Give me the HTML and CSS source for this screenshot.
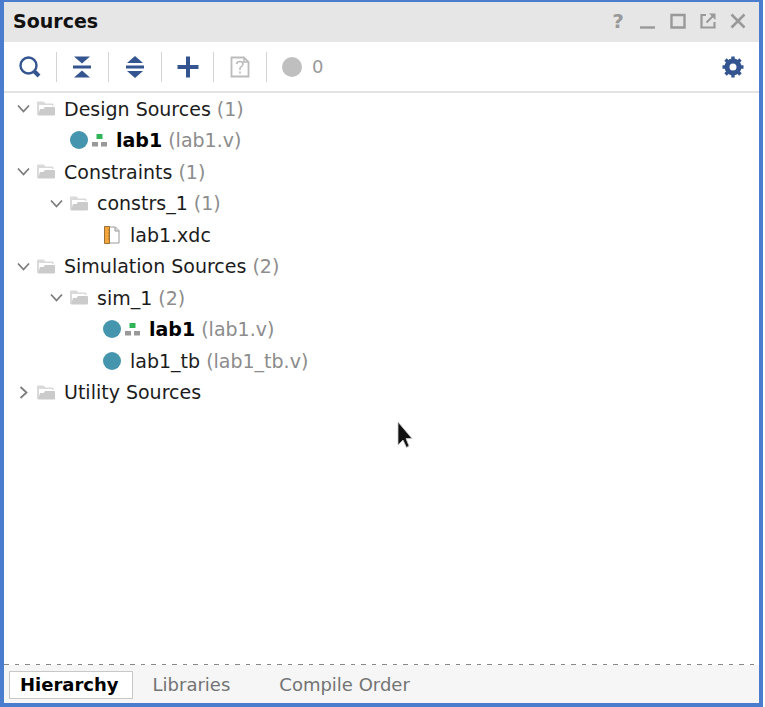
FILE: index.html
```html
<!DOCTYPE html>
<html lang="en">
<head>
<meta charset="utf-8">
<title>Sources</title>
<link rel="stylesheet" href="styles.css">
</head>
<body>
<svg class="defs" aria-hidden="true">
  <symbol id="folder" viewBox="0 0 18 15">
    <path d="M0 14V1.500Q0 0.500 1 0.500H6.500L8.500 2.500H15.500Q16.500 2.500 16.500 3.500V5H15V4H2V14Z" fill="#dadada"/>
    <path d="M3 8H6.500L8 6H17Q18 6 18 7V13.500Q18 14.500 17 14.500H1Z" fill="#cbcbcb"/>
  </symbol>
  <symbol id="down" viewBox="0 0 13 13"><path d="M1 3.500L6.500 9.500L12 3.500" fill="none" stroke="#7c7c7c" stroke-width="1.800"/></symbol>
  <symbol id="right" viewBox="0 0 13 13"><path d="M3.500 1L9.500 6.500L3.500 12" fill="none" stroke="#7c7c7c" stroke-width="1.800"/></symbol>
  <symbol id="module" viewBox="0 0 18 18"><circle cx="9" cy="9" r="9" fill="#4595ae"/></symbol>
  <symbol id="top" viewBox="0 0 15 13"><path d="M4.500 0H10.500V5H4.500Z" fill="#2fb457"/><path d="M0 8H6V12.500H0ZM9 8H15V12.500H9Z" fill="#999"/></symbol>
  <symbol id="xdc" viewBox="0 0 18 18">
    <path d="M6 1H12.500L16 4.500V17H6Z" fill="#fff" stroke="#9a9a9a"/><path d="M12 1V5H16" fill="#ddd" stroke="#9a9a9a"/>
    <path d="M1.500 0.500H6.500V17.500H1.500Z" fill="#f4a63a" stroke="#98703a"/><path d="M5 4H6M5 7H6M5 10H6M5 13H6" stroke="#98703a"/>
  </symbol>
</svg>
<main class="panel">
  <header class="titlebar">
    <h1>Sources</h1>
    <div class="window-actions">
      <button aria-label="Help" class="help">?</button>
      <button aria-label="Minimize"><svg width="16" height="16"><path d="M0 14.500H15" stroke="#999" stroke-width="2.400"/></svg></button>
      <button aria-label="Maximize"><svg width="16" height="16"><path d="M1.500 2H14.500V14.500H1.500Z" fill="none" stroke="#999" stroke-width="2.400"/></svg></button>
      <button aria-label="Float"><svg width="16" height="16"><path d="M6 2H1.500V14.500H14.500V9" fill="none" stroke="#999" stroke-width="2.200"/><path d="M6.500 9.500L13 3" stroke="#999" stroke-width="2"/><path d="M9 0.500H15.500V7Z" fill="#999"/></svg></button>
      <button aria-label="Close"><svg width="16" height="16"><path d="M1.500 1.500L14.500 14.500M14.500 1.500L1.500 14.500" stroke="#999" stroke-width="2.600"/></svg></button>
    </div>
  </header>
  <div class="toolbar">
    <div class="tools">
      <button aria-label="Search"><svg width="22" height="22"><circle cx="9.500" cy="9.500" r="8" fill="none" stroke="#34558f" stroke-width="2.400"/><path d="M15.500 15.500L20 20" stroke="#34558f" stroke-width="4"/></svg></button>
      <button aria-label="Collapse all"><svg width="18" height="22"><path d="M1 0.500H17L9 7.500ZM0 9.500H18V12.500H0ZM1 21.500H17L9 14.500Z" fill="#34558f"/></svg></button>
      <button aria-label="Expand all"><svg width="18" height="22"><path d="M1 7H17L9 0ZM0 9.500H18V12.500H0ZM1 15H17L9 22Z" fill="#34558f"/></svg></button>
      <button aria-label="Add sources"><svg width="22" height="22"><path d="M11 0.500V21.500M0.500 11H21.500" stroke="#34558f" stroke-width="4"/></svg></button>
      <button aria-label="File information"><svg width="20" height="22"><path d="M1.500 1.500H14L18.500 6V20.500H1.500Z" fill="none" stroke="#bcbcbc" stroke-width="1.800"/><path d="M14 1.500V6H18.500M6.500 8Q7 5.500 10 5.500Q13 5.500 13 8Q13 9.500 10 12V14M10 15.500V17.500" fill="none" stroke="#bcbcbc" stroke-width="1.600"/></svg></button>
    </div>
    <div class="messages"><svg width="20" height="20"><circle cx="10" cy="10" r="10" fill="#bfbfbf"/></svg><span>0</span></div>
    <button class="settings" aria-label="Settings"><svg width="22" height="22" viewBox="-11 -11 22 22"><circle r="6" fill="none" stroke="#34558f" stroke-width="5"/><path d="M0-10.500V-7M0 7V10.500M-10.500 0H-7M7 0H10.500M-7.500-7.500L-5-5M5 5L7.500 7.500M7.500-7.500L5-5M-5 5L-7.500 7.500" stroke="#34558f" stroke-width="3.400"/></svg></button>
  </div>
  <ul class="tree">
    <li><button aria-label="Collapse"><svg class="chevron"><use href="#down"/></svg></button><svg class="folder"><use href="#folder"/></svg><span>Design Sources <small>(1)</small></span></li>
    <li class="leaf level-1"><svg class="file"><use href="#module"/></svg><svg class="top"><use href="#top"/></svg><span><b>lab1</b> <small>(lab1.v)</small></span></li>
    <li><button aria-label="Collapse"><svg class="chevron"><use href="#down"/></svg></button><svg class="folder"><use href="#folder"/></svg><span>Constraints <small>(1)</small></span></li>
    <li class="level-1"><button aria-label="Collapse"><svg class="chevron"><use href="#down"/></svg></button><svg class="folder"><use href="#folder"/></svg><span>constrs_1 <small>(1)</small></span></li>
    <li class="leaf level-2"><svg class="file"><use href="#xdc"/></svg><span>lab1.xdc</span></li>
    <li><button aria-label="Collapse"><svg class="chevron"><use href="#down"/></svg></button><svg class="folder"><use href="#folder"/></svg><span>Simulation Sources <small>(2)</small></span></li>
    <li class="level-1"><button aria-label="Collapse"><svg class="chevron"><use href="#down"/></svg></button><svg class="folder"><use href="#folder"/></svg><span>sim_1 <small>(2)</small></span></li>
    <li class="leaf level-2"><svg class="file"><use href="#module"/></svg><svg class="top"><use href="#top"/></svg><span><b>lab1</b> <small>(lab1.v)</small></span></li>
    <li class="leaf level-2"><svg class="file"><use href="#module"/></svg><span>lab1_tb <small>(lab1_tb.v)</small></span></li>
    <li><button aria-label="Expand"><svg class="chevron"><use href="#right"/></svg></button><svg class="folder"><use href="#folder"/></svg><span>Utility Sources</span></li>
  </ul>
  <nav class="tabs">
    <button class="active">Hierarchy</button>
    <button>Libraries</button>
    <button>Compile Order</button>
  </nav>
</main>
<svg class="pointer" width="16" height="30" viewBox="0 0 16 30" aria-hidden="true"><path d="M1 2V25L6 20L9.500 27.500L12 26L9 18.500H15Z" fill="#111" stroke="#ccc" stroke-width="0.800"/></svg>
</body>
</html>
```
FILE: styles.css
```css
* { box-sizing: border-box; }

body {
  margin: 0;
  padding-right: 2px;
  background: #fff;
  color: #1c1c1c;
  font: 18px/24px "DejaVu Sans", sans-serif;
}

.defs { position: absolute; width: 0; height: 0; }

button {
  display: flex;
  align-items: center;
  justify-content: center;
  padding: 0;
  border: 0;
  background: none;
  color: inherit;
  font: inherit;
}

svg { display: block; flex: none; }

.panel {
  display: flex;
  flex-direction: column;
  min-height: 100vh;
  border: 4px solid #4a7dce;
  border-top-width: 2px;
}

.titlebar {
  display: flex;
  align-items: center;
  justify-content: space-between;
  height: 40px;
  padding: 0 6px 2px 9px;
  background: #e6e6e6;
}

h1 {
  margin: 0;
  color: #111;
  font-size: 19px;
}

.window-actions { display: flex; }
.window-actions button { width: 30px; height: 30px; }
.window-actions .help { color: #999; font-size: 20px; font-weight: bold; }

.toolbar {
  display: flex;
  align-items: center;
  height: 51px;
  border-bottom: 2px solid #e3e3e3;
}

.tools {
  display: grid;
  grid-template-columns: repeat(5, 1fr);
  width: 263px;
}

.tools button {
  height: 30px;
  border-right: 1px solid #d4d4d4;
}

.messages {
  display: flex;
  align-items: center;
  gap: 10px;
  padding-left: 15px;
  color: #999;
}

.settings { margin: 0 15px 0 auto; }

.tree {
  flex: 1;
  margin: 0;
  padding: 0;
  list-style: none;
  font-size: 19px;
}

.tree li {
  display: flex;
  align-items: center;
  height: 31px;
  padding-left: 13px;
}

.tree li:nth-child(even) { height: 32px; }
.tree .level-1 { padding-left: 46px; }
.tree .leaf.level-1 { padding-left: 66px; }
.tree .leaf.level-2 { padding-left: 99px; }

.tree small { color: #8c8c8c; font-size: inherit; }
.tree b { color: #000; }

.chevron { width: 13px; height: 13px; margin-right: 7px; }
.folder { width: 18px; height: 15px; margin-right: 9px; }
.file { width: 18px; height: 18px; margin-right: 9px; }
.top { width: 15px; height: 13px; margin: 0 9px 0 -5px; }

.tabs {
  display: flex;
  align-items: center;
  height: 39px;
  padding: 3px 5px 0;
  background:
    repeating-linear-gradient(90deg, #888 0 5px, #fff 5px 11px, #888 11px 15px, #fff 15px 21px) top / 100% 1px no-repeat,
    #f6f6f6;
  color: #737373;
}

.tabs button { height: 28px; margin-right: 49px; }

.tabs .active {
  margin-right: 20px;
  padding: 0 13px 0 10px;
  border: 1px solid #c8c8c8;
  background: #fff;
  color: #000;
  font-weight: bold;
}

.pointer { position: absolute; left: 397px; top: 420px; }
```
